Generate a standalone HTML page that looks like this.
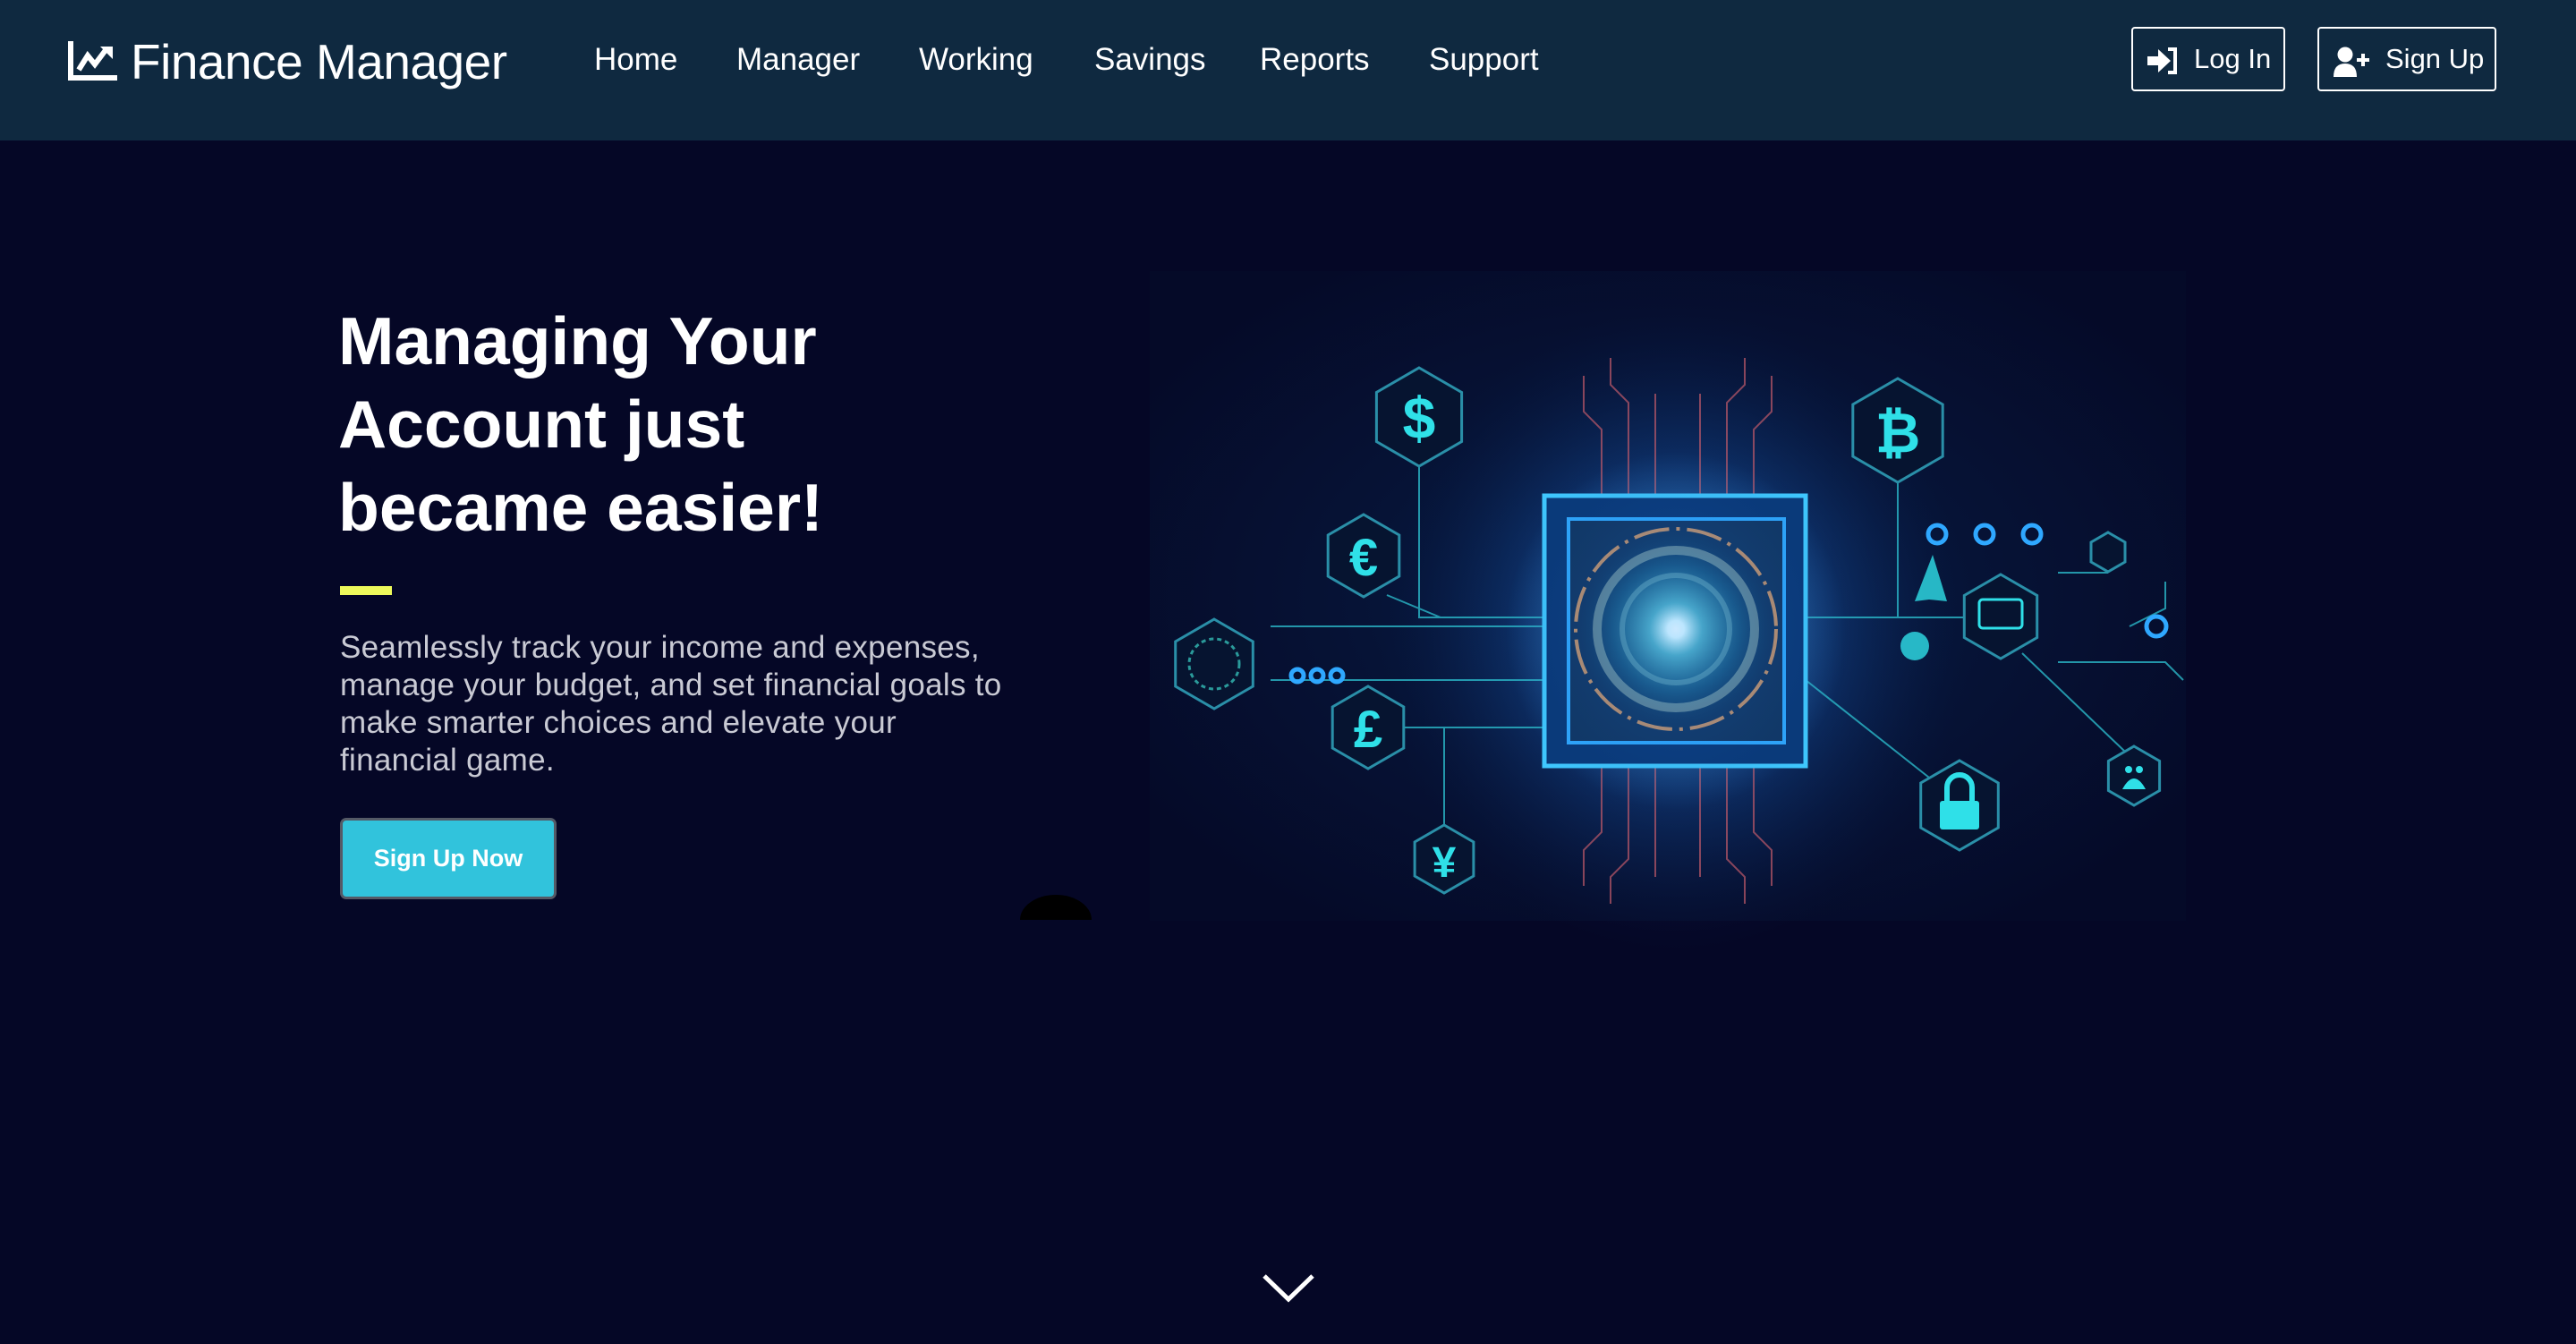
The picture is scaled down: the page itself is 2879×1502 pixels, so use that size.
<!DOCTYPE html>
<html><head><meta charset="utf-8"><style>
*{margin:0;padding:0;box-sizing:border-box}
html,body{width:2879px;height:1502px;overflow:hidden;background:#050726;font-family:"Liberation Sans",sans-serif;color:#fff}
.nav{position:absolute;left:0;top:0;width:2879px;height:157px;background:#0f2940}
.logo{position:absolute;left:76px;top:34px;font-size:55px;line-height:70px;white-space:nowrap}
.logo svg{position:absolute;left:0;top:12px}
.logo span{position:absolute;left:70px;top:0;letter-spacing:-0.5px}
.nl{position:absolute;top:44px;font-size:35px;line-height:46px;white-space:nowrap}
.btn{position:absolute;top:30px;height:72px;border:2px solid #fff;border-radius:4px;font-size:31px;line-height:68px}
.btn svg{position:absolute;top:20px}
.btn span{position:absolute;top:0}
h1{position:absolute;left:378px;top:335px;font-size:75px;line-height:93px;font-weight:bold;white-space:nowrap}
.bar{position:absolute;left:380px;top:655px;width:58px;height:10px;background:#eef95b}
p{position:absolute;left:380px;top:703px;font-size:35px;line-height:42px;color:#c9cad4;white-space:nowrap;letter-spacing:0.3px}
.cta{position:absolute;left:380px;top:914px;width:242px;height:91px;background:#31c3dc;border:3px solid #555a66;border-radius:7px;font-size:27px;font-weight:bold;line-height:85px;text-align:center}
</style></head><body>
<div class="nav">
  <div class="logo">
    <svg width="56" height="44" viewBox="0 0 56 44"><path d="M3 0V41H55" fill="none" stroke="#fff" stroke-width="6"/><path d="M12 32L22 16L30 26L42 10" fill="none" stroke="#fff" stroke-width="6"/><path d="M36 6H50V20Z" fill="#fff"/></svg>
    <span>Finance Manager</span>
  </div>
  <div class="nl" style="left:664px">Home</div>
  <div class="nl" style="left:823px">Manager</div>
  <div class="nl" style="left:1027px">Working</div>
  <div class="nl" style="left:1223px">Savings</div>
  <div class="nl" style="left:1408px">Reports</div>
  <div class="nl" style="left:1597px">Support</div>
  <div class="btn" style="left:2382px;width:172px">
    <svg style="left:16px" width="36" height="32" viewBox="0 0 36 32"><path d="M0 11H12V3L26 16L12 29V21H0Z" fill="#fff"/><path d="M23 3H31V29H23" fill="none" stroke="#fff" stroke-width="4"/></svg>
    <span style="left:68px">Log In</span>
  </div>
  <div class="btn" style="left:2590px;width:200px">
    <svg style="left:16px" width="42" height="34" viewBox="0 0 42 34"><circle cx="13" cy="9" r="8.5" fill="#fff"/><path d="M0 34Q0 19 13 19Q26 19 26 34Z" fill="#fff"/><path d="M33 8V22M26 15H40" stroke="#fff" stroke-width="4"/></svg>
    <span style="left:74px">Sign Up</span>
  </div>
</div>

<h1>Managing Your<br>Account just<br>became easier!</h1>
<div class="bar"></div>
<p>Seamlessly track your income and expenses,<br>manage your budget, and set financial goals to<br>make smarter choices and elevate your<br>financial game.</p>
<div class="cta">Sign Up Now</div>

<svg style="position:absolute;left:0;top:0" width="2879" height="1502" viewBox="0 0 2879 1502">
<defs>
<radialGradient id="bg" cx="0.5" cy="0.5" r="0.6">
<stop offset="0" stop-color="#071e48"/><stop offset="0.5" stop-color="#061336"/><stop offset="1" stop-color="#050a28"/></radialGradient>
<radialGradient id="glow" cx="0.5" cy="0.5" r="0.5">
<stop offset="0" stop-color="#ffffff"/><stop offset="0.08" stop-color="#e8fbff"/><stop offset="0.25" stop-color="#5fc7d8" stop-opacity="0.8"/><stop offset="0.6" stop-color="#1d6f9a" stop-opacity="0.5"/><stop offset="1" stop-color="#0a2a5a" stop-opacity="0"/></radialGradient>
<radialGradient id="halo" cx="0.5" cy="0.5" r="0.5">
<stop offset="0" stop-color="#2aa3ff" stop-opacity="0.7"/><stop offset="0.5" stop-color="#1a5fb8" stop-opacity="0.35"/><stop offset="1" stop-color="#0a2050" stop-opacity="0"/></radialGradient>
<radialGradient id="wh" cx="0.5" cy="0.5" r="0.5">
<stop offset="0" stop-color="#bfefff" stop-opacity="0.6"/><stop offset="1" stop-color="#3fa8ff" stop-opacity="0"/></radialGradient>
</defs>
<rect x="1285" y="303" width="1158" height="726" fill="url(#bg)"/>
<ellipse cx="1873" cy="705" rx="330" ry="360" fill="url(#halo)"/>
<g stroke="#c05a6a" stroke-width="2" fill="none" opacity="0.7">
<path d="M1790 554V480L1770 460V420M1820 554V450L1800 430V400M1850 554V440M1900 554V440M1930 554V450L1950 430V400M1960 554V480L1980 460V420"/>
<path d="M1790 856V930L1770 950V990M1820 856V960L1800 980V1010M1850 856V980M1900 856V980M1930 856V960L1950 980V1010M1960 856V930L1980 950V990"/>
</g>
<g stroke="#2bb8c8" stroke-width="2" fill="none" opacity="0.8">
<path d="M1586 521V690H1726M1420 700H1726M1420 760H1726M1570 813H1726M1614 813V923M1550 665L1610 690M2018 690H2230M2121 539V690M2018 760L2170 880M2260 730L2375 840M2300 640H2356M2380 700L2420 680V650M2300 740H2420L2440 760"/>
</g>
<g fill="#061430" stroke="#2a8fa8" stroke-width="3">
<polygon points="1586,411 1633.6,438.5 1633.6,493.5 1586,521 1538.4,493.5 1538.4,438.5"/>
<polygon points="2121,423 2171.2,452 2171.2,510 2121,539 2070.8,510 2070.8,452"/>
<polygon points="1524,575 1563.8,598 1563.8,644 1524,667 1484.2,644 1484.2,598"/>
<polygon points="1357,692 1400.3,717 1400.3,767 1357,792 1313.7,767 1313.7,717"/>
<polygon points="1529,767 1568.8,790 1568.8,836 1529,859 1489.2,836 1489.2,790"/>
<polygon points="1614,922 1646.9,941 1646.9,979 1614,998 1581.1,979 1581.1,941"/>
<polygon points="2190,850 2233.3,875 2233.3,925 2190,950 2146.7,925 2146.7,875"/>
<polygon points="2236,642 2276.7,665.5 2276.7,712.5 2236,736 2195.3,712.5 2195.3,665.5"/>
<polygon points="2356,595 2375,606 2375,628 2356,639 2337,628 2337,606"/>
<polygon points="2385,834 2413.6,850.5 2413.6,883.5 2385,900 2356.4,883.5 2356.4,850.5"/>
</g>
<g fill="#2fe0e8" font-family="Liberation Sans,sans-serif" font-weight="bold" text-anchor="middle">
<text x="1586" y="490" font-size="66">$</text>
<text x="2121" y="505" font-size="62">₿</text>
<text x="1524" y="643" font-size="58">€</text>
<text x="1529" y="835" font-size="58">£</text>
<text x="1614" y="980" font-size="48">¥</text>
</g>
<rect x="2168" y="895" width="44" height="32" rx="3" fill="#2fe0e8"/>
<path d="M2176 895V880A14 14 0 0 1 2204 880V895" fill="none" stroke="#2fe0e8" stroke-width="6"/>
<circle cx="1357" cy="742" r="28" fill="none" stroke="#2a9a9a" stroke-width="3" stroke-dasharray="5 4"/>
<rect x="2212" y="670" width="48" height="32" rx="4" fill="none" stroke="#2fe0e8" stroke-width="3"/>
<path d="M2372 882Q2385 858 2398 882Z" fill="#2fe0e8"/>
<circle cx="2379" cy="860" r="4" fill="#2fe0e8"/><circle cx="2391" cy="860" r="4" fill="#2fe0e8"/>
<g fill="none" stroke="#2fa8ff" stroke-width="5">
<circle cx="2165" cy="597" r="10"/><circle cx="2218" cy="597" r="10"/><circle cx="2271" cy="597" r="10"/>
<circle cx="1450" cy="755" r="7"/><circle cx="1472" cy="755" r="7"/><circle cx="1494" cy="755" r="7"/>
<circle cx="2410" cy="700" r="11"/>
</g>
<path d="M2156 670L2140 672L2160 620L2176 672Z" fill="#2fe0e8" opacity="0.8"/>
<circle cx="2140" cy="722" r="16" fill="#2fe0e8" opacity="0.8"/>
<ellipse cx="1873" cy="705" rx="190" ry="200" fill="url(#wh)"/>
<rect x="1726" y="554" width="292" height="302" fill="#0a3a7a" stroke="#3fc8ff" stroke-width="5"/>
<rect x="1753" y="580" width="241" height="250" fill="#113866" stroke="#2fa8ff" stroke-width="4"/>
<circle cx="1873" cy="703" r="118" fill="url(#glow)"/>
<circle cx="1873" cy="703" r="112" fill="none" stroke="#d9a070" stroke-width="4" stroke-dasharray="40 8 4 8" opacity="0.85"/>
<circle cx="1873" cy="703" r="88" fill="none" stroke="#a8c8c0" stroke-width="10" opacity="0.5"/>
<circle cx="1873" cy="703" r="60" fill="none" stroke="#6fb0c0" stroke-width="6" opacity="0.5"/>
<ellipse cx="1873" cy="703" rx="200" ry="230" fill="url(#halo)" opacity="0.35"/>
<path d="M1140 1028A40 28 0 0 1 1220 1028Z" fill="#000"/>
<path d="M1413 1426L1440 1452L1467 1426" fill="none" stroke="#fff" stroke-width="5"/>
</svg>
</body></html>
